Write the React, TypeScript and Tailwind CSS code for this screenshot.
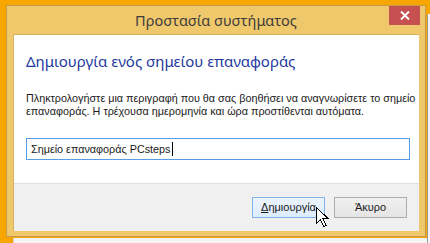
import React from 'react';

const ui = { fontFamily: '"Noto Sans", "Open Sans", sans-serif' };
const body = { fontFamily: '"Liberation Sans", Arial, sans-serif' };

const Cursor = () => (
  <svg
    className="absolute left-[316px] top-[207px]"
    width="13"
    height="21"
    viewBox="0 0 13 21"
    shapeRendering="crispEdges"
  >
    <path
      d="M0.5 0.5 L0.5 16.5 L4.5 12.5 L7.5 19.5 L10 18.5 L7 11.5 L12 11.5 Z"
      fill="#fff"
      stroke="#000"
      strokeWidth="1"
      strokeLinejoin="miter"
    />
  </svg>
);

export default function App() {
  return (
    <div className="relative w-[430px] h-[243px] overflow-hidden bg-[#f7a600]" style={ui}>
      {/* window behind, peeking out on the right and bottom */}
      <div className="absolute left-[13px] top-[238px] w-[417px] h-[5px] bg-[#f3f3f3] border-l border-[#d0d0d0]" />
      <div className="absolute left-[427px] top-[14px] w-[3px] h-[229px] bg-[#f3f3f3] border-l border-[#9a9a9a]" />

      {/* dialog */}
      <div className="relative ml-[6px] mt-[5px] w-[420px] h-[232px] border border-[#c79a4a] bg-[#f0c86c] flex flex-col">
        {/* title bar */}
        <div className="h-[28px] flex items-center justify-center">
          <span className="text-[14.5px] text-[#3c3c3c] leading-none pt-[1px]">Προστασία συστήματος</span>
        </div>
        <button className="absolute right-[5px] top-0 w-[31px] h-[19px] bg-[#c75050] flex items-center justify-center">
          <svg width="10" height="9" viewBox="0 0 10 9">
            <path d="M1 0.5 L9 8.5 M9 0.5 L1 8.5" stroke="#fff" strokeWidth="2" />
          </svg>
        </button>

        {/* client area */}
        <div className="mx-[6px] mb-[5px] flex-1 flex flex-col border-t border-l border-[#d9b25e]">
          <div className="bg-white h-[148px] flex flex-col px-[12px]">
            <div className="mt-[16px] text-[15px] leading-[20px] text-[#1e3aa0]">
              Δημιουργία ενός σημείου επαναφοράς
            </div>
            <p className="mt-[21px] text-[10.8px] leading-[13px] text-[#1a1a1a] whitespace-nowrap" style={body}>
              Πληκτρολογήστε μια περιγραφή που θα σας βοηθήσει να αναγνωρίσετε το σημείο
              <br />
              επαναφοράς. Η τρέχουσα ημερομηνία και ώρα προστίθενται αυτόματα.
            </p>
            <div className="mt-[20px] w-[384px] h-[22px] border border-[#569de5] flex items-center px-[4px] text-[10.8px] text-[#1a1a1a]" style={body}>
              <span>Σημείο επαναφοράς PCsteps</span>
              <span className="ml-[1px] w-px h-[14px] bg-black" />
            </div>
          </div>
          <div className="flex-1 bg-[#f0f0f0] border-t border-[#dfdfdf] flex justify-end items-start gap-[9px] pt-[13px] pr-[12px]" style={body}>
            <button className="w-[73px] h-[21px] border border-[#7eb4ea] bg-gradient-to-b from-[#ecf4fc] to-[#dcecfc] text-[11px] text-[#1a1a1a] flex items-center justify-center">
              <span><span className="underline">Δ</span>ημιουργία</span>
            </button>
            <button className="w-[73px] h-[21px] border border-[#acacac] bg-gradient-to-b from-[#f0f0f0] to-[#e5e5e5] text-[11px] text-[#1a1a1a] flex items-center justify-center">
              Άκυρο
            </button>
          </div>
        </div>
      </div>

      <Cursor />
    </div>
  );
}
